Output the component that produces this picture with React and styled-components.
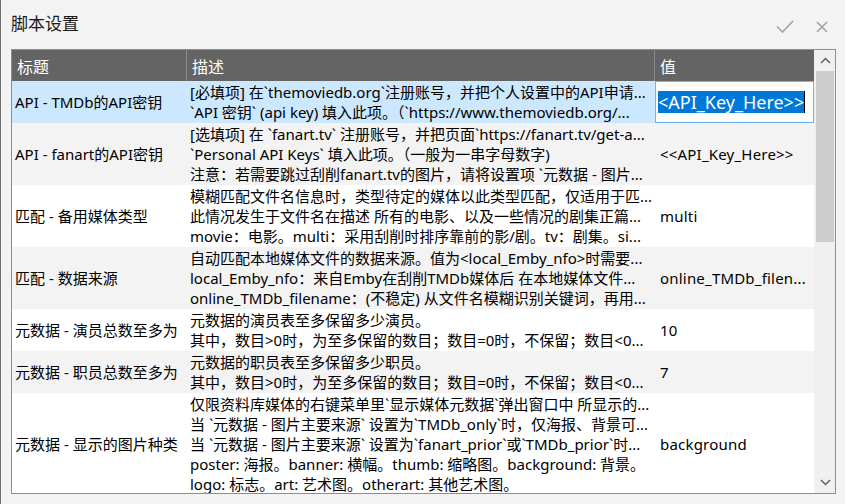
import React from "react";
import styled, { createGlobalStyle } from "styled-components";

const GlobalStyle = createGlobalStyle`
  html, body {
    margin: 0;
    padding: 0;
    background: #f3f3f3;
    overflow: hidden;
  }
  * {
    box-sizing: border-box;
  }
`;

const FONT = `"Noto Sans", "Noto Sans CJK SC", sans-serif`;

const rows = [
  {
    title: "API - TMDb的API密钥",
    lines: [
      "[必填项] 在`themoviedb.org`注册账号，并把个人设置中的API申请...",
      "`API 密钥` (api key) 填入此项。（`https://www.themoviedb.org/...",
    ],
    value: "<API_Key_Here>>",
    editing: true,
  },
  {
    title: "API - fanart的API密钥",
    lines: [
      "[选填项] 在 `fanart.tv` 注册账号，并把页面`https://fanart.tv/get-a...",
      "`Personal API Keys` 填入此项。（一般为一串字母数字)",
      "注意：若需要跳过刮削fanart.tv的图片，请将设置项 `元数据 - 图片...",
    ],
    value: "<<API_Key_Here>>",
  },
  {
    title: "匹配 - 备用媒体类型",
    lines: [
      "模糊匹配文件名信息时，类型待定的媒体以此类型匹配，仅适用于匹...",
      "此情况发生于文件名在描述 所有的电影、以及一些情况的剧集正篇...",
      "movie：电影。multi：采用刮削时排序靠前的影/剧。tv：剧集。si...",
    ],
    value: "multi",
  },
  {
    title: "匹配 - 数据来源",
    lines: [
      "自动匹配本地媒体文件的数据来源。值为<local_Emby_nfo>时需要...",
      "local_Emby_nfo：来自Emby在刮削TMDb媒体后 在本地媒体文件...",
      "online_TMDb_filename：(不稳定) 从文件名模糊识别关键词，再用...",
    ],
    value: "online_TMDb_filen...",
  },
  {
    title: "元数据 - 演员总数至多为",
    lines: [
      "元数据的演员表至多保留多少演员。",
      "其中，数目>0时，为至多保留的数目；数目=0时，不保留；数目<0...",
    ],
    value: "10",
  },
  {
    title: "元数据 - 职员总数至多为",
    lines: [
      "元数据的职员表至多保留多少职员。",
      "其中，数目>0时，为至多保留的数目；数目=0时，不保留；数目<0...",
    ],
    value: "7",
  },
  {
    title: "元数据 - 显示的图片种类",
    lines: [
      "仅限资料库媒体的右键菜单里`显示媒体元数据`弹出窗口中 所显示的...",
      "当 `元数据 - 图片主要来源` 设置为`TMDb_only`时，仅海报、背景可...",
      "当 `元数据 - 图片主要来源` 设置为`fanart_prior`或`TMDb_prior`时...",
      "poster: 海报。banner: 横幅。thumb: 缩略图。background: 背景。",
      "logo: 标志。art: 艺术图。otherart: 其他艺术图。",
    ],
    value: "background",
  },
];

const App = () => {
  return (
    <Window>
      <GlobalStyle />
      <TitleBar>
        <Title>脚本设置</Title>
        <Actions>
          <svg width="18" height="13" viewBox="0 0 18 13">
            <path d="M1 6.5 L6.5 12 L17 1" fill="none" stroke="#a3a3a3" strokeWidth="1.6" />
          </svg>
          <svg width="12" height="12" viewBox="0 0 12 12">
            <path d="M1 1 L11 11 M11 1 L1 11" fill="none" stroke="#a3a3a3" strokeWidth="1.6" />
          </svg>
        </Actions>
      </TitleBar>
      <Table>
        <Main>
          <Header>
            <HeadCell divider>标题</HeadCell>
            <HeadCell divider>描述</HeadCell>
            <HeadCell>值</HeadCell>
          </Header>
          <Body>
            {rows.map((row, i) => (
              <Row key={row.title} selected={row.editing} odd={i % 2 === 1}>
                <TitleCell>{row.title}</TitleCell>
                <DescCell>
                  {row.lines.map((line) => (
                    <Line key={line}>{line}</Line>
                  ))}
                </DescCell>
                {row.editing ? (
                  <EditCell>
                    <Selected>{row.value}</Selected>
                    <Caret />
                  </EditCell>
                ) : (
                  <ValueCell>
                    <Line>{row.value}</Line>
                  </ValueCell>
                )}
              </Row>
            ))}
          </Body>
        </Main>
        <Scrollbar>
          <ScrollButton>
            <svg width="11" height="7" viewBox="0 0 11 7">
              <path d="M1 6 L5.5 1.5 L10 6" fill="none" stroke="#606060" strokeWidth="1.5" />
            </svg>
          </ScrollButton>
          <Thumb />
          <ScrollButton bottom>
            <svg width="11" height="7" viewBox="0 0 11 7">
              <path d="M1 1 L5.5 5.5 L10 1" fill="none" stroke="#606060" strokeWidth="1.5" />
            </svg>
          </ScrollButton>
        </Scrollbar>
      </Table>
    </Window>
  );
};

export default App;

const Window = styled.div`
  height: 504px;
  border-left: 1px solid #707070;
  background: #f3f3f3;
  padding: 0 9px 0 10px;
  display: flex;
  flex-direction: column;
  font-family: ${FONT};
  color: #000;
`;

const TitleBar = styled.div`
  height: 49px;
  display: flex;
  align-items: flex-start;
  padding-top: 12px;
`;

const Title = styled.div`
  font-size: 17px;
  line-height: 24px;
  color: #1a1a1a;
`;

const Actions = styled.div`
  margin-left: auto;
  margin-right: 8px;
  margin-top: 8px;
  display: flex;
  align-items: center;
  gap: 22px;
`;

const Table = styled.div`
  height: 445px;
  border: 1px solid #8e8e8e;
  display: grid;
  grid-template-columns: 802px 1fr;
  overflow: hidden;
`;

const Main = styled.div`
  display: flex;
  flex-direction: column;
  overflow: hidden;
`;

const COLS = "175px 468px 159px";

const Header = styled.div`
  display: grid;
  grid-template-columns: ${COLS};
  height: 31px;
  flex-shrink: 0;
  background: #646464;
  color: #fff;
  font-size: 16px;
`;

const HeadCell = styled.div`
  display: flex;
  align-items: center;
  padding-left: 5px;
  border-right: ${(p) => (p.divider ? "1px solid #8a8a8a" : "none")};
`;

const Body = styled.div`
  overflow: hidden;
`;

const Row = styled.div`
  display: grid;
  grid-template-columns: ${COLS};
  background: ${(p) => (p.selected ? "#cce8ff" : p.odd ? "#f3f3f3" : "#ffffff")};
  font-size: 15px;
  line-height: 20px;
`;

const TitleCell = styled.div`
  display: flex;
  align-items: center;
  padding: 1px 0 1px 3px;
  white-space: nowrap;
  overflow: hidden;
`;

const DescCell = styled.div`
  padding: 1px 2px 1px 3px;
  min-width: 0;
`;

const Line = styled.div`
  white-space: nowrap;
  overflow: hidden;
  text-overflow: clip;
`;

const ValueCell = styled.div`
  display: flex;
  align-items: center;
  padding: 1px 4px 1px 5px;
  min-width: 0;
  letter-spacing: 0.2px;
`;

const EditCell = styled.div`
  display: flex;
  align-items: center;
  background: #fff;
  border: 1px solid #6cb4ee;
  padding-left: 2px;
  overflow: hidden;
`;

const Selected = styled.span`
  background: #0078d7;
  color: #fff;
  font-size: 18px;
  line-height: 22px;
  white-space: nowrap;
`;

const Caret = styled.span`
  width: 1px;
  height: 22px;
  background: #000;
  flex-shrink: 0;
`;

const Scrollbar = styled.div`
  background: #f0f0f0;
  display: flex;
  flex-direction: column;
  padding-left: 1px;
`;

const ScrollButton = styled.div`
  height: 21px;
  display: flex;
  align-items: center;
  justify-content: center;
  margin-top: ${(p) => (p.bottom ? "auto" : "0")};
`;

const Thumb = styled.div`
  height: 171px;
  margin: 0 1px 0 1px;
  background: #cdcdcd;
`;
